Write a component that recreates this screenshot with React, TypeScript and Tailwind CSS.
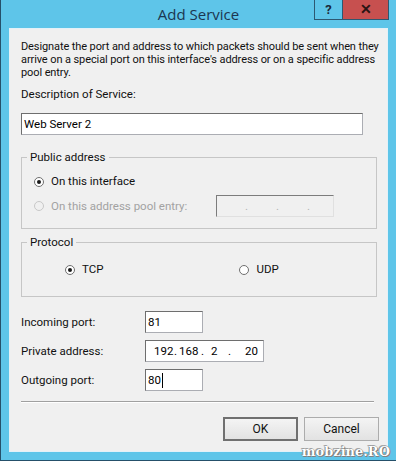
import React from "react";

const Radio = ({ checked, disabled }: { checked?: boolean; disabled?: boolean }) => (
  <span
    className={`inline-flex shrink-0 items-center justify-center w-[10px] h-[10px] rounded-full border ${
      disabled ? "border-[#c8c8c8] bg-[#f0f0f0]" : "border-[#6f6f6f] bg-white"
    }`}
  >
    {checked && <span className="w-[4px] h-[4px] rounded-full bg-[#1a1a1a]" />}
  </span>
);

const Field = ({ className, children }: { className: string; children?: React.ReactNode }) => (
  <div
    className={`h-[22px] bg-white border border-[#abadb3] border-t-[#6e6e6e] border-l-[#6e6e6e] flex items-center text-black whitespace-nowrap ${className}`}
  >
    {children}
  </div>
);

export default function App() {
  return (
    <div
      className="w-[396px] h-[461px] bg-[#5ec5e9] flex flex-col relative border-l border-b border-[#25506a] overflow-hidden"
      style={{ fontFamily: 'Roboto, "Liberation Sans", Arial, sans-serif' }}
    >
      {/* title bar */}
      <div className="h-[28px] relative flex items-center justify-center">
        <span
          className="text-[15px] text-[#1c3650] leading-none pt-[1px]"
          style={{ fontFamily: '"Open Sans", "Noto Sans", sans-serif' }}
        >
          Add Service
        </span>
        <div className="absolute top-0 right-[7px] flex">
          <div className="w-[29px] h-[20px] border border-t-0 border-[#2d5871] flex items-center justify-center text-[13px] font-bold text-[#1a2a3a]">
            ?
          </div>
          <div className="w-[46px] h-[20px] bg-[#c7504f] border border-t-0 border-l-0 border-[#2d5871] flex items-center justify-center text-[14px] font-bold text-[#2a1414]">
            ✕
          </div>
        </div>
      </div>

      {/* client area */}
      <div className="mx-[8px] h-[424px] bg-[#f0f0f0] border border-[#e3f1f8] px-[11px] pt-[11px] text-[11.5px] text-[#111] leading-[13px]">
        <p className="whitespace-nowrap text-[11px] tracking-[-0.1px]">
          Designate the port and address to which packets should be sent when they
          <br />
          arrive on a special port on this interface's address or on a specific address
          <br />
          pool entry.
        </p>
        <div className="mt-[9px]">Description of Service:</div>
        <Field className="mt-[12px] w-[342px] pl-[2px]">Web Server 2</Field>

        <fieldset className="mt-[16px] w-[356px] h-[78px] border border-[#c6c6c6]">
          <legend className="ml-[5px] px-[3px]">Public address</legend>
          <div className="flex items-center gap-[7px] pl-[12px] mt-[11px]">
            <Radio checked />
            <span>On this interface</span>
          </div>
          <div className="flex items-center pl-[12px] mt-[7px]">
            <Radio disabled />
            <span className="ml-[7px] text-[#a2a2a2]">On this address pool entry:</span>
            <div className="ml-auto mr-[42px] w-[118px] h-[22px] border border-[#e0e0e0] border-t-[#7c7c7c] border-l-[#7c7c7c] flex items-center text-[#b4b4b4]">
              <span className="ml-[28px]">.</span>
              <span className="ml-[28px]">.</span>
              <span className="ml-[28px]">.</span>
            </div>
          </div>
        </fieldset>

        <fieldset className="mt-[7px] w-[356px] h-[61px] border border-[#c6c6c6]">
          <legend className="ml-[5px] px-[3px]">Protocol</legend>
          <div className="flex items-center mt-[14px]">
            <span className="ml-[43px] flex items-center gap-[7px]">
              <Radio checked />
              <span>TCP</span>
            </span>
            <span className="ml-[136px] flex items-center gap-[7px]">
              <Radio />
              <span>UDP</span>
            </span>
          </div>
        </fieldset>

        <div className="mt-[14px] flex flex-col gap-[7px]">
          <div className="flex items-center">
            <span className="w-[124px]">Incoming port:</span>
            <Field className="w-[58px] pl-[2px]">81</Field>
          </div>
          <div className="flex items-center">
            <span className="w-[124px]">Private address:</span>
            <Field className="w-[119px] pl-[8px]">
              <span className="w-[20px] shrink-0">192</span>
              <span className="w-[5px] shrink-0">.</span>
              <span className="w-[22px] shrink-0">168</span>
              <span className="w-[10px] shrink-0">.</span>
              <span className="w-[17px] shrink-0">2</span>
              <span className="w-[17px] shrink-0">.</span>
              <span className="shrink-0">20</span>
            </Field>
          </div>
          <div className="flex items-center">
            <span className="w-[124px]">Outgoing port:</span>
            <Field className="w-[58px] pl-[2px]">
              80<span className="inline-block w-[1px] h-[15px] bg-black ml-[1px]" />
            </Field>
          </div>
        </div>

        <div className="mt-[10px] w-[353px] h-[2px] border-t border-[#a0a0a0] border-b border-b-white" />

        <div className="mt-[14px] flex justify-end gap-[6px] w-[358px]">
          <button className="w-[75px] h-[24px] border-2 border-[#707070] bg-gradient-to-b from-[#f4f4f4] to-[#e2e2e2] text-[12px] text-[#111]">
            OK
          </button>
          <button className="w-[75px] h-[24px] border border-[#acacac] bg-gradient-to-b from-[#f4f4f4] to-[#e2e2e2] text-[12px] text-[#111]">
            Cancel
          </button>
        </div>
      </div>

      <span
        className="absolute right-[6px] bottom-[0px] text-[13px] leading-[16px] font-bold text-white [text-shadow:0_0_1px_#444,1px_1px_0_#888,-1px_-1px_0_#aaa]"
        style={{ fontFamily: '"DejaVu Serif", serif' }}
      >
        mobzine.RO
      </span>
    </div>
  );
}
